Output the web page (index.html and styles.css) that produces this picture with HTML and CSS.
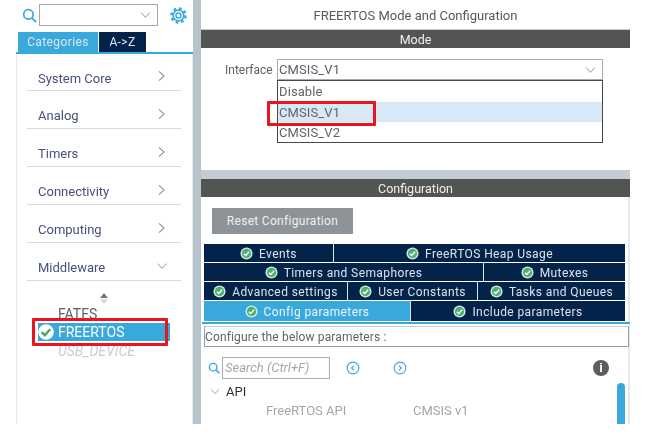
FILE: index.html
```html
<!DOCTYPE html>
<html lang="en">
  <head>
    <meta charset="UTF-8" />
    <title>FREERTOS Mode and Configuration</title>
    <link rel="stylesheet" href="styles.css">
  </head>
  <body>
    <svg class="defs" width="0" height="0">
      <symbol id="ok" viewBox="0 0 14 14">
        <circle cx="7" cy="7" r="6.5" fill="#d6efe0" />
        <circle cx="7" cy="7" r="5" fill="#4fae74" />
        <path d="M4.2 7.2l2 2 3.7-4" fill="none" stroke="#fff" stroke-width="1.6" />
      </symbol>
      <symbol id="ok-white" viewBox="0 0 16 16">
        <circle cx="8" cy="8" r="7.8" fill="#fff" />
        <path d="M3.8 8.2l3 3 5.4-6" fill="none" stroke="#46a868" stroke-width="2.4" />
      </symbol>
      <symbol id="right" viewBox="0 0 10 14">
        <path d="M2 1.5l6 5.5-6 5.5" fill="none" stroke="#8a8f96" stroke-width="1.2" />
      </symbol>
      <symbol id="down" viewBox="0 0 14 10">
        <path d="M1.5 2l5.5 6 5.5-6" fill="none" stroke="#8a8f96" stroke-width="1.2" />
      </symbol>
      <symbol id="search" viewBox="0 0 14 14">
        <circle cx="6" cy="6" r="4.4" fill="none" stroke="#39a9dc" stroke-width="1.6" />
        <path d="M9.2 9.2l4 4" stroke="#39a9dc" stroke-width="1.8" />
      </symbol>
    </svg>

    <div class="app">
      <div class="sidebar">
        <div class="search-row">
          <svg class="search-icon"><use href="#search" /></svg>
          <div class="side-combo"><svg class="chev"><use href="#down" /></svg></div>
          <svg class="gear" viewBox="0 0 16 16">
            <circle cx="8" cy="8" r="5" fill="none" stroke="#39a9dc" stroke-width="1.6" />
            <circle cx="8" cy="8" r="6.6" fill="none" stroke="#39a9dc" stroke-width="2.4" stroke-dasharray="2.6 2.6" />
            <circle cx="8" cy="8" r="2.4" fill="none" stroke="#39a9dc" stroke-width="1.3" />
          </svg>
        </div>
        <div class="side-tabs">
          <div class="side-tab active">Categories</div>
          <div class="side-tab">A-&gt;Z</div>
        </div>
        <div class="side-body">
          <div class="cat">System Core<svg class="cat-right"><use href="#right" /></svg></div>
          <div class="cat">Analog<svg class="cat-right"><use href="#right" /></svg></div>
          <div class="cat">Timers<svg class="cat-right"><use href="#right" /></svg></div>
          <div class="cat">Connectivity<svg class="cat-right"><use href="#right" /></svg></div>
          <div class="cat">Computing<svg class="cat-right"><use href="#right" /></svg></div>
          <div class="cat">Middleware<svg class="cat-down"><use href="#down" /></svg></div>
          <div class="sort"><span class="sort-up"></span><span class="sort-down"></span></div>
          <div class="mw-item">FATFS</div>
          <div class="mw-item selected"><svg class="mw-ok"><use href="#ok-white" /></svg>FREERTOS</div>
          <div class="mw-item disabled">USB_DEVICE</div>
          <div class="red-box box-freertos"></div>
        </div>
      </div>

      <div class="divider"></div>

      <div class="main">
        <div class="main-title">FREERTOS Mode and Configuration</div>
        <div class="bar">Mode</div>
        <div class="mode-panel">
          <div class="iface-row">
            <span class="iface-label">Interface</span>
            <div class="iface-combo">CMSIS_V1<svg class="chev"><use href="#down" /></svg></div>
          </div>
          <div class="dropdown">
            <div class="option">Disable</div>
            <div class="option current">CMSIS_V1</div>
            <div class="option">CMSIS_V2</div>
          </div>
          <div class="red-box box-cmsis"></div>
        </div>
        <div class="band"></div>
        <div class="bar">Configuration</div>
        <div class="config-panel">
          <div class="reset-btn">Reset Configuration</div>
          <div class="tabs">
            <div class="tab-row">
              <div class="tab w130"><svg class="ok"><use href="#ok" /></svg>Events</div>
              <div class="tab grow"><svg class="ok"><use href="#ok" /></svg>FreeRTOS Heap Usage</div>
            </div>
            <div class="tab-row">
              <div class="tab w280"><svg class="ok"><use href="#ok" /></svg>Timers and Semaphores</div>
              <div class="tab grow"><svg class="ok"><use href="#ok" /></svg>Mutexes</div>
            </div>
            <div class="tab-row">
              <div class="tab w144"><svg class="ok"><use href="#ok" /></svg>Advanced settings</div>
              <div class="tab w130"><svg class="ok"><use href="#ok" /></svg>User Constants</div>
              <div class="tab grow"><svg class="ok"><use href="#ok" /></svg>Tasks and Queues</div>
            </div>
            <div class="tab-row last">
              <div class="tab w207 active"><svg class="ok"><use href="#ok" /></svg>Config parameters</div>
              <div class="tab grow"><svg class="ok"><use href="#ok" /></svg>Include parameters</div>
            </div>
          </div>
          <div class="tabs-line"></div>
          <div class="desc">Configure the below parameters :</div>
          <div class="param-tools">
            <svg class="param-search"><use href="#search" /></svg>
            <div class="param-input">Search (Ctrl+F)</div>
            <svg class="nav nav-prev" viewBox="0 0 14 14">
              <circle cx="7" cy="7" r="5.9" fill="none" stroke="#39a9dc" stroke-width="1.1" />
              <path d="M8 4.6L5.6 7 8 9.4" fill="none" stroke="#39a9dc" stroke-width="1.2" />
            </svg>
            <svg class="nav nav-next" viewBox="0 0 14 14">
              <circle cx="7" cy="7" r="5.9" fill="none" stroke="#39a9dc" stroke-width="1.1" />
              <path d="M6 4.6L8.4 7 6 9.4" fill="none" stroke="#39a9dc" stroke-width="1.2" />
            </svg>
            <div class="info">i</div>
          </div>
          <div class="tree">
            <div class="scrollbar"></div>
            <div class="tree-head"><svg class="tree-chev"><use href="#down" /></svg>API</div>
            <div class="tree-row"><span class="tree-key">FreeRTOS API</span><span>CMSIS v1</span></div>
          </div>
        </div>
      </div>
    </div>
  </body>
</html>
```

FILE: styles.css
```css
body {
  margin: 0;
  background-color: white;
  font-family: Roboto, "Liberation Sans", sans-serif;
  color: #5a6068;
}
.defs {
  display: block;
  height: 0;
}
.app {
  display: flex;
  width: 630px;
  height: 424px;
  padding-left: 16px;
  box-sizing: border-box;
  overflow: hidden;
  filter: blur(0.35px);
}
.sidebar {
  width: 177px;
  flex: none;
}
.divider {
  width: 8px;
  flex: none;
  background-color: #b7c3cb;
}
.search-row {
  display: flex;
  align-items: center;
  height: 30px;
}
.search-icon {
  width: 15px;
  height: 15px;
  margin-left: 6px;
  margin-right: 2px;
}
.side-combo {
  width: 119px;
  height: 22px;
  box-sizing: border-box;
  border: 1px solid #a5a8ab;
  display: flex;
  align-items: center;
  justify-content: flex-end;
  padding-right: 6px;
}
.chev {
  width: 11px;
  height: 8px;
}
.gear {
  width: 17px;
  height: 17px;
  margin-left: 12px;
}
.side-tabs {
  display: flex;
  margin-top: 2px;
  padding-left: 2px;
  height: 20px;
  border-bottom: 2px solid #39a9dc;
}
.side-tab {
  width: 47px;
  margin-left: 1px;
  background-color: #03234b;
  color: #dfe6ee;
  font-size: 12px;
  letter-spacing: 0.4px;
  line-height: 20px;
  text-align: center;
}
.side-tab.active {
  width: 80px;
  margin-left: 0;
  background-color: #39a9dc;
}
.side-body {
  position: relative;
  height: 370px;
  border-left: 1px solid #e6e9ec;
  border-right: 1px solid #e6e9ec;
  padding-left: 10px;
}
.cat {
  display: flex;
  align-items: center;
  justify-content: space-between;
  width: 154px;
  height: 37px;
  padding: 12px 15px 0 11px;
  box-sizing: border-box;
  border-bottom: 1px solid #d4d9e2;
  font-size: 13px;
  color: #47507c;
}
.cat + .cat {
  height: 38px;
}
.cat-right {
  width: 9px;
  height: 12px;
  margin-top: -4px;
}
.cat-down {
  width: 12px;
  height: 8px;
  margin-top: -4px;
  margin-right: -2px;
}
.sort {
  display: flex;
  flex-direction: column;
  align-items: center;
  gap: 1px;
  width: 154px;
  margin-top: 12px;
  height: 12px;
}
.sort-up,
.sort-down {
  width: 0;
  height: 0;
  border-left: 4px solid transparent;
  border-right: 4px solid transparent;
}
.sort-up {
  border-bottom: 5px solid #72777d;
}
.sort-down {
  border-top: 5px solid #d5d8db;
}
.mw-item {
  width: 132px;
  height: 18px;
  margin-left: 11px;
  padding-left: 20px;
  box-sizing: border-box;
  font-size: 14px;
  line-height: 18px;
  color: #5a5f74;
}
.mw-item.selected {
  display: flex;
  align-items: center;
  padding-left: 0;
  background-color: #39a9dc;
  color: white;
}
.mw-ok {
  width: 16px;
  height: 16px;
  margin-right: 4px;
}
.mw-item.disabled {
  margin-top: 1px;
  color: #c6ccd8;
  font-style: italic;
}
.red-box {
  position: absolute;
  border: 3px solid #e8141e;
  border-radius: 1px;
  box-sizing: border-box;
}
.box-freertos {
  left: 15px;
  top: 264px;
  width: 136px;
  height: 28px;
}
.main {
  flex: none;
  width: 429px;
}
.main-title {
  height: 29px;
  font-size: 13px;
  line-height: 32px;
  text-align: center;
  color: #55595e;
  border-bottom: 1px solid #c3ccd2;
}
.bar {
  height: 18px;
  background-color: #535553;
  color: #f1f1f1;
  font-size: 12.5px;
  line-height: 19px;
  text-align: center;
}
.mode-panel {
  position: relative;
  height: 122px;
  padding: 11px 0 0 24px;
  box-sizing: border-box;
}
.iface-row {
  display: flex;
  align-items: center;
  height: 21px;
}
.iface-label {
  width: 52px;
  font-size: 12px;
  color: #5b6065;
}
.iface-combo,
.dropdown {
  width: 326px;
  box-sizing: border-box;
}
.iface-combo {
  display: flex;
  align-items: center;
  justify-content: space-between;
  height: 21px;
  padding: 0 6px 0 1px;
  border: 1px solid #a9acb0;
  font-size: 13px;
  letter-spacing: 0.1px;
}
.dropdown {
  height: 63px;
  margin-left: 52px;
  border: 1px solid #45484b;
}
.option {
  height: 20.5px;
  line-height: 21px;
  padding-left: 1px;
  font-size: 13px;
  letter-spacing: 0.1px;
  color: #5f646b;
}
.option.current {
  background-color: #d9e8f5;
}
.box-cmsis {
  left: 66px;
  top: 53px;
  width: 109px;
  height: 25px;
}
.band {
  height: 9px;
  background-color: #c3ccd2;
}
.config-panel {
  position: relative;
  height: 227px;
  padding: 11px 5px 0 3px;
  box-sizing: border-box;
  box-shadow: inset -2px 0 0 #e6e9ec;
}
.reset-btn {
  width: 141px;
  height: 26px;
  margin-left: 8px;
  background-color: #8e9397;
  color: #eef0f1;
  font-size: 12px;
  letter-spacing: 0.3px;
  line-height: 26px;
  text-align: center;
}
.tabs {
  margin-top: 10px;
  width: 421px;
}
.tab-row {
  display: flex;
  height: 18px;
  margin-bottom: 1px;
}
.tab-row.last {
  height: 20px;
  margin-bottom: 0;
}
.tab {
  display: flex;
  align-items: center;
  justify-content: center;
  box-sizing: border-box;
  padding-top: 1px;
  background-color: #03234b;
  color: #dde3ea;
  font-size: 12px;
  letter-spacing: 0.4px;
  border-right: 1px solid #dfe5ea;
}
.tab.grow {
  flex: 1;
  border-right: none;
}
.tab.active {
  background-color: #39a9dc;
  color: #eaf5fb;
}
.w130 {
  width: 130px;
}
.w144 {
  width: 144px;
}
.w207 {
  width: 207px;
}
.w280 {
  width: 280px;
}
.ok {
  width: 13px;
  height: 13px;
  margin-right: 6px;
}
.tabs-line {
  height: 2px;
  margin: 1px -5px 0 -2px;
  background-color: #39a9dc;
}
.desc {
  width: 425px;
  height: 21px;
  margin-top: 2px;
  box-sizing: border-box;
  border: 1px solid #9a9ea2;
  border-top-color: #c3ccd2;
  font-size: 12px;
  letter-spacing: 0.15px;
  line-height: 20px;
  color: #5f6368;
}
.param-tools {
  display: flex;
  align-items: center;
  height: 22px;
  margin-top: 10px;
}
.param-search {
  width: 12px;
  height: 12px;
  margin-left: 4px;
  margin-right: 2px;
}
.param-input {
  width: 108px;
  height: 22px;
  box-sizing: border-box;
  border: 1px solid #a9acb0;
  padding-left: 2px;
  font-size: 13px;
  font-style: italic;
  line-height: 20px;
  color: #a5a9ad;
}
.nav {
  width: 14px;
  height: 14px;
}
.nav-prev {
  margin-left: 16px;
}
.nav-next {
  margin-left: 33px;
}
.info {
  width: 16px;
  height: 16px;
  margin-left: 186px;
  border-radius: 50%;
  background-color: #5b5d5e;
  color: white;
  font-family: "Liberation Sans", sans-serif;
  font-size: 13px;
  font-weight: bold;
  line-height: 16px;
  text-align: center;
}
.tree {
  position: relative;
}
.tree-head {
  display: flex;
  align-items: center;
  height: 22px;
  margin-top: 1px;
  font-size: 13px;
  color: #2d3034;
}
.tree-chev {
  width: 10px;
  height: 7px;
  margin-left: 6px;
  margin-right: 6px;
}
.tree-row {
  display: flex;
  height: 18px;
  padding-left: 62px;
  font-size: 13px;
  line-height: 18px;
  color: #a3a6aa;
}
.tree-key {
  width: 147px;
}
.scrollbar {
  position: absolute;
  left: 413px;
  top: 3px;
  width: 8px;
  height: 45px;
  border-radius: 4px 4px 0 0;
  background-color: #39a9dc;
}
```
